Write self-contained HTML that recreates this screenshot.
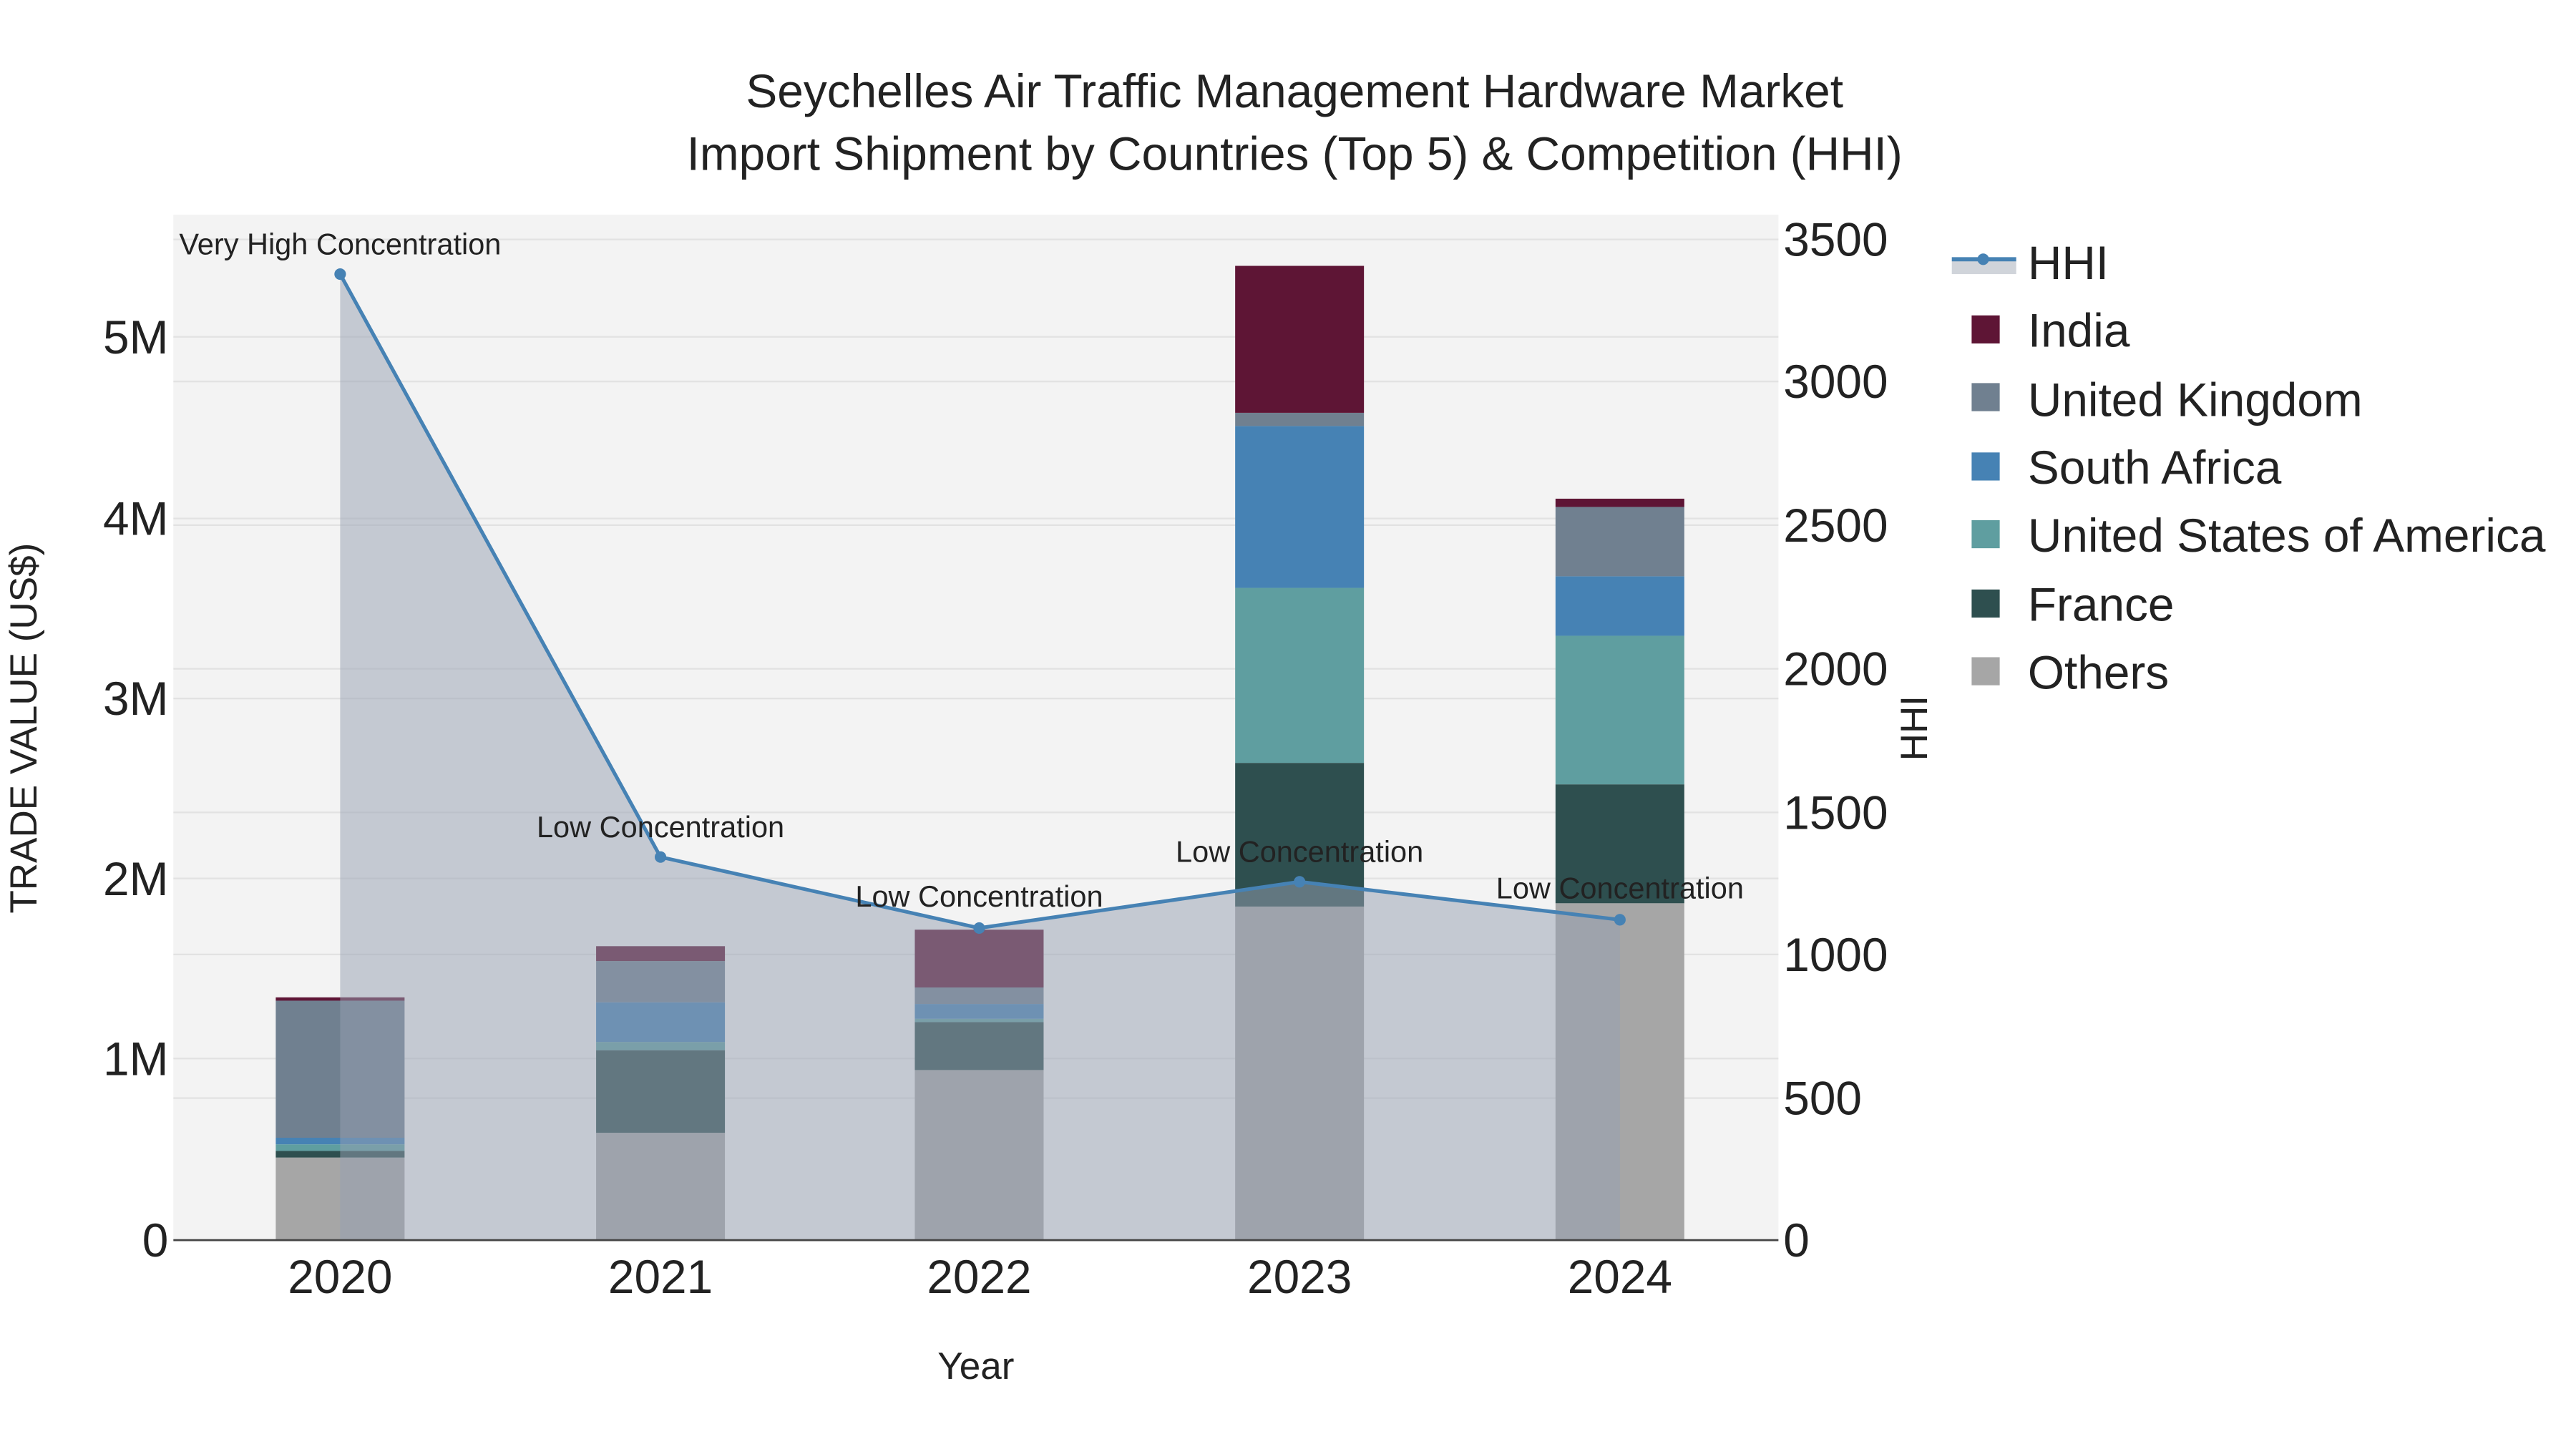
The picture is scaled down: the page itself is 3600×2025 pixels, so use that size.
<!DOCTYPE html>
<html><head><meta charset="utf-8"><style>
html,body{margin:0;padding:0;background:#fff;}
svg{display:block;}
text{font-family:"Liberation Sans",Arial,sans-serif;fill:#222;}
</style></head><body>
<svg width="3600" height="2025" viewBox="0 0 1560 877.5" xmlns="http://www.w3.org/2000/svg">
<rect x="0" y="0" width="1560" height="877.5" fill="#fff"/>
<rect x="105" y="130" width="972" height="621" fill="#f3f3f3"/>
<g stroke="#e2e2e2" stroke-width="1">
<line x1="105" x2="1077" y1="641" y2="641"/><line x1="105" x2="1077" y1="532" y2="532"/>
<line x1="105" x2="1077" y1="423" y2="423"/><line x1="105" x2="1077" y1="314" y2="314"/>
<line x1="105" x2="1077" y1="204" y2="204"/>
<line x1="105" x2="1077" y1="665" y2="665"/><line x1="105" x2="1077" y1="578" y2="578"/>
<line x1="105" x2="1077" y1="492" y2="492"/><line x1="105" x2="1077" y1="405" y2="405"/>
<line x1="105" x2="1077" y1="318" y2="318"/><line x1="105" x2="1077" y1="231" y2="231"/>
<line x1="105" x2="1077" y1="145" y2="145"/>
</g>
<g>
<rect x="167" y="701" width="78" height="50" fill="#a6a6a6"/>
<rect x="167" y="697" width="78" height="4" fill="#2e4f4f"/>
<rect x="167" y="693" width="78" height="4" fill="#5f9ea0"/>
<rect x="167" y="689" width="78" height="4" fill="#4682b4"/>
<rect x="167" y="606" width="78" height="83" fill="#708090"/>
<rect x="167" y="604" width="78" height="2" fill="#5e1535"/>

<rect x="361" y="686" width="78" height="65" fill="#a6a6a6"/>
<rect x="361" y="636" width="78" height="50" fill="#2e4f4f"/>
<rect x="361" y="631" width="78" height="5" fill="#5f9ea0"/>
<rect x="361" y="607" width="78" height="24" fill="#4682b4"/>
<rect x="361" y="582" width="78" height="25" fill="#708090"/>
<rect x="361" y="573" width="78" height="9" fill="#5e1535"/>

<rect x="554" y="648" width="78" height="103" fill="#a6a6a6"/>
<rect x="554" y="619" width="78" height="29" fill="#2e4f4f"/>
<rect x="554" y="617" width="78" height="2" fill="#5f9ea0"/>
<rect x="554" y="608" width="78" height="9" fill="#4682b4"/>
<rect x="554" y="598" width="78" height="10" fill="#708090"/>
<rect x="554" y="563" width="78" height="35" fill="#5e1535"/>

<rect x="748" y="549" width="78" height="202" fill="#a6a6a6"/>
<rect x="748" y="462" width="78" height="87" fill="#2e4f4f"/>
<rect x="748" y="356" width="78" height="106" fill="#5f9ea0"/>
<rect x="748" y="258" width="78" height="98" fill="#4682b4"/>
<rect x="748" y="250" width="78" height="8" fill="#708090"/>
<rect x="748" y="161" width="78" height="89" fill="#5e1535"/>

<rect x="942" y="547" width="78" height="204" fill="#a6a6a6"/>
<rect x="942" y="475" width="78" height="72" fill="#2e4f4f"/>
<rect x="942" y="385" width="78" height="90" fill="#5f9ea0"/>
<rect x="942" y="349" width="78" height="36" fill="#4682b4"/>
<rect x="942" y="307" width="78" height="42" fill="#708090"/>
<rect x="942" y="302" width="78" height="5" fill="#5e1535"/>
</g>
<polygon points="206,166 400,519 593,562 787,534 981,557 981,751 206,751" fill="rgba(150,160,178,0.5)"/>
<line x1="105" x2="1077" y1="751" y2="751" stroke="#444" stroke-width="1.2"/>
<polyline points="206,166 400,519 593,562 787,534 981,557" fill="none" stroke="#4682b4" stroke-width="2.2"/>
<g fill="#4682b4"><circle cx="206" cy="166" r="3.5"/><circle cx="400" cy="519" r="3.5"/><circle cx="593" cy="562" r="3.5"/><circle cx="787" cy="534" r="3.5"/><circle cx="981" cy="557" r="3.5"/></g>
<g font-size="18" text-anchor="middle">
<text x="206" y="154">Very High Concentration</text>
<text x="400" y="507">Low Concentration</text>
<text x="593" y="549">Low Concentration</text>
<text x="787" y="522">Low Concentration</text>
<text x="981" y="544">Low Concentration</text>
</g>
<g font-size="28.5" text-anchor="middle">
<text x="784" y="65">Seychelles Air Traffic Management Hardware Market</text>
<text x="784" y="103">Import Shipment by Countries (Top 5) &amp; Competition (HHI)</text>
</g>
<g font-size="28.5" text-anchor="end">
<text x="102" y="761">0</text><text x="102" y="651">1M</text><text x="102" y="542">2M</text>
<text x="102" y="433">3M</text><text x="102" y="324">4M</text><text x="102" y="214">5M</text>
</g>
<g font-size="28.5" text-anchor="start">
<text x="1080" y="761">0</text><text x="1080" y="675">500</text><text x="1080" y="588">1000</text>
<text x="1080" y="502">1500</text><text x="1080" y="415">2000</text><text x="1080" y="328">2500</text>
<text x="1080" y="241">3000</text><text x="1080" y="155">3500</text>
</g>
<g font-size="28.5" text-anchor="middle">
<text x="206" y="783">2020</text><text x="400" y="783">2021</text><text x="593" y="783">2022</text>
<text x="787" y="783">2023</text><text x="981" y="783">2024</text>
</g>
<text x="591" y="835" font-size="23" text-anchor="middle">Year</text>
<text transform="translate(22,441) rotate(-90)" font-size="23" text-anchor="middle">TRADE VALUE (US$)</text>
<text transform="translate(1167,441) rotate(-90)" font-size="23" text-anchor="middle">HHI</text>
<rect x="1182" y="158" width="39" height="8" fill="#d0d4da"/>
<line x1="1182" x2="1221" y1="157" y2="157" stroke="#4682b4" stroke-width="2.5"/>
<circle cx="1201" cy="157" r="3.5" fill="#4682b4"/>
<rect x="1194" y="191" width="17" height="17" fill="#5e1535"/>
<rect x="1194" y="232" width="17" height="17" fill="#708090"/>
<rect x="1194" y="274" width="17" height="17" fill="#4682b4"/>
<rect x="1194" y="315" width="17" height="17" fill="#5f9ea0"/>
<rect x="1194" y="357" width="17" height="17" fill="#2e4f4f"/>
<rect x="1194" y="398" width="17" height="17" fill="#a6a6a6"/>
<g font-size="28.5">
<text x="1228" y="169">HHI</text>
<text x="1228" y="210">India</text>
<text x="1228" y="252">United Kingdom</text>
<text x="1228" y="293">South Africa</text>
<text x="1228" y="334">United States of America</text>
<text x="1228" y="376">France</text>
<text x="1228" y="417">Others</text>
</g>
</svg>
</body></html>
